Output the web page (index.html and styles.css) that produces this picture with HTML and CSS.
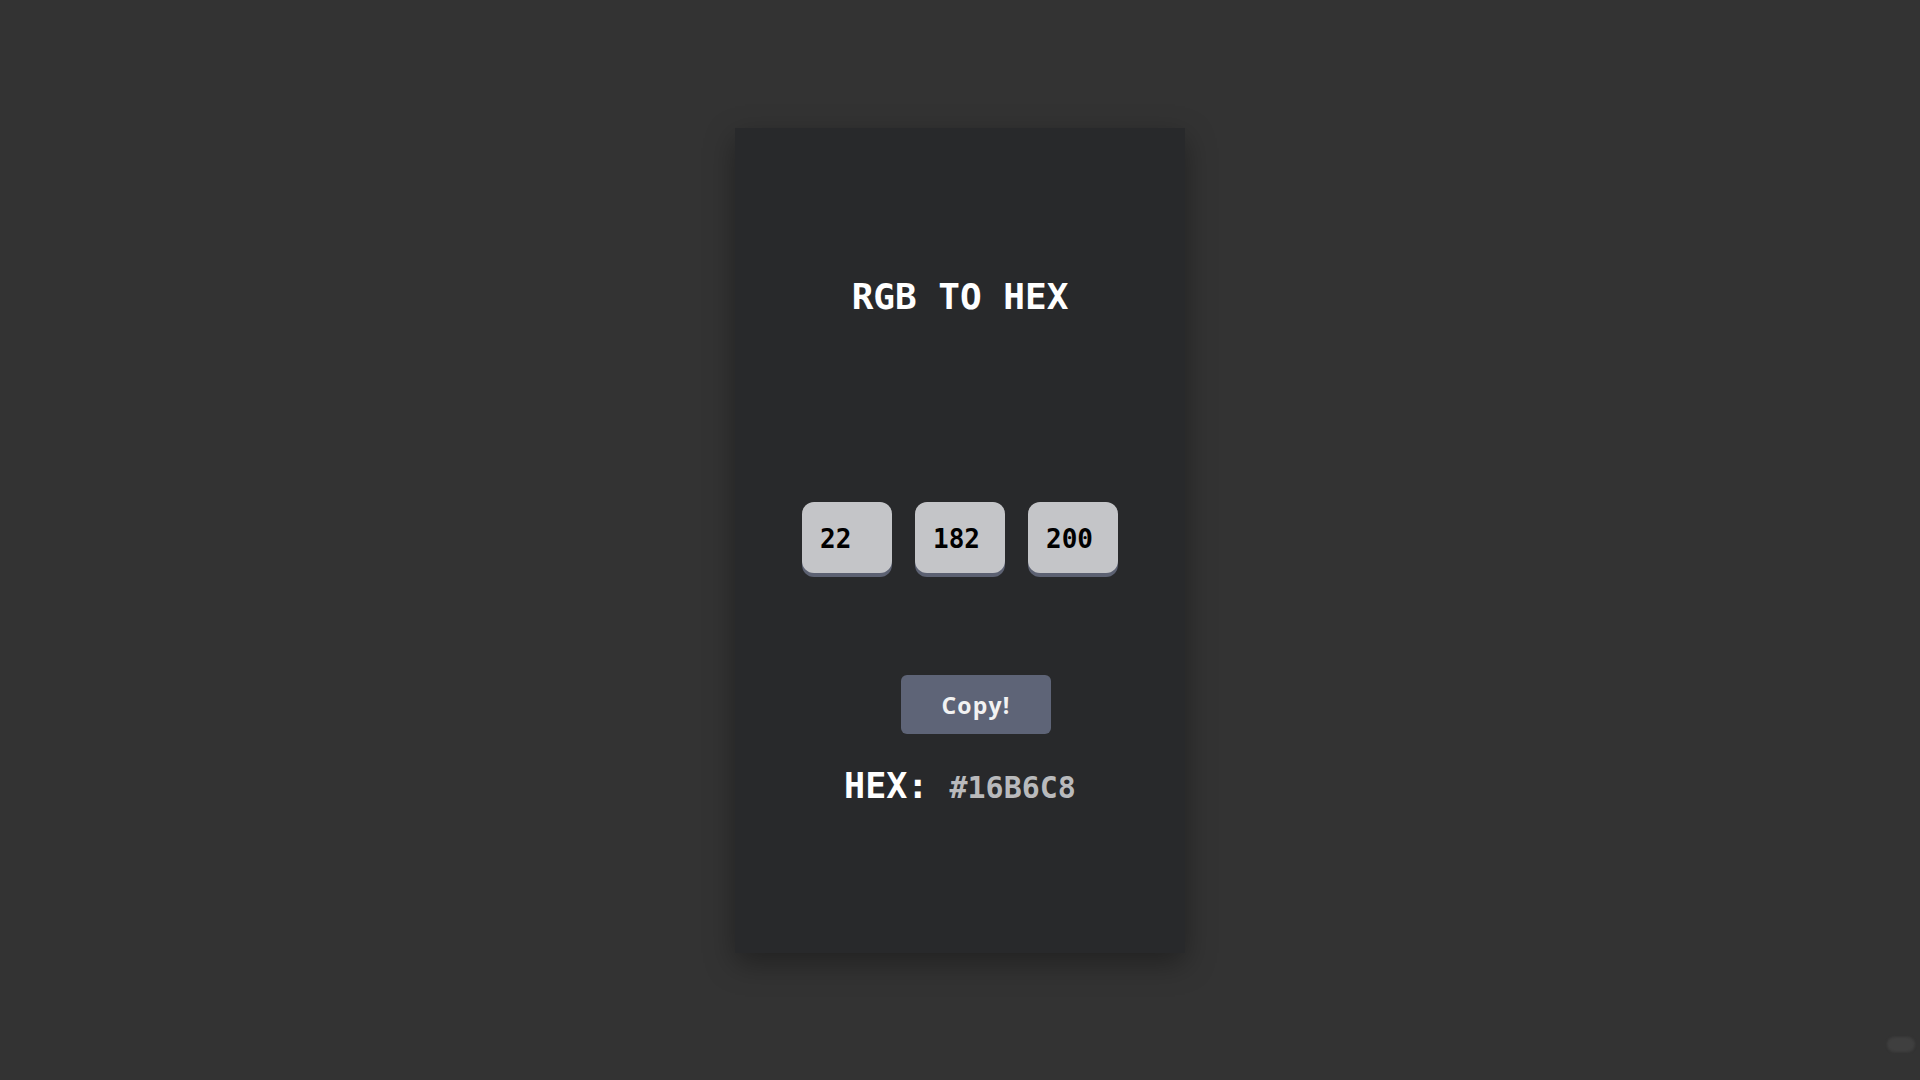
FILE: index.html
```html
<!DOCTYPE html>
<html lang="en">
<head>
<meta charset="utf-8">
<title>RGB to HEX</title>
<link rel="stylesheet" href="styles.css">
</head>
<body>
<main class="card">
  <h1 class="title">RGB TO HEX</h1>
  <div class="inputs">
    <input class="channel" type="text" value="22">
    <input class="channel" type="text" value="182">
    <input class="channel" type="text" value="200">
  </div>
  <button class="copy">Copy!</button>
  <p class="hex">HEX: <span class="hex-value">#16B6C8</span></p>
</main>
<div class="pill"></div>
</body>
</html>
```
FILE: styles.css
```css
html, body {
  margin: 0;
  padding: 0;
  height: 100%;
}
body {
  background: #333333;
  display: flex;
  justify-content: center;
  align-items: flex-start;
  font-family: "DejaVu Sans Mono", monospace;
}
.card {
  margin-top: 128px;
  width: 450px;
  height: 825px;
  box-sizing: border-box;
  background: #28292b;
  box-shadow: 0 10px 28px rgba(0, 0, 0, 0.35);
  display: flex;
  flex-direction: column;
  align-items: center;
  padding-top: 147px;
}
.title {
  margin: 0;
  font-size: 36px;
  line-height: 43px;
  font-weight: bold;
  color: #ffffff;
}
.inputs {
  margin-top: 184px;
  display: flex;
  gap: 23px;
}
.channel {
  width: 90px;
  height: 71px;
  box-sizing: border-box;
  border: none;
  border-radius: 12px;
  background: #c4c5c8;
  box-shadow: 0 4px 0 #5c6172;
  padding: 2px 0 0 18px;
  font-family: "DejaVu Sans Mono", monospace;
  font-size: 26px;
  font-weight: bold;
  color: #000000;
  outline: none;
}
.copy {
  margin-top: 102px;
  margin-left: 32px;
  width: 150px;
  height: 59px;
  border: none;
  border-radius: 6px;
  background: #5e6477;
  color: #f2f2f2;
  font-family: "Open Sans", sans-serif;
  font-weight: 700;
  font-size: 23px;
  letter-spacing: 1.2px;
  cursor: pointer;
}
.hex {
  margin: 31px 0 0 0;
  font-size: 35px;
  line-height: 43px;
  font-weight: bold;
  color: #ffffff;
}
.hex-value {
  font-size: 30px;
  font-weight: bold;
  color: #b9babc;
}
.pill {
  position: fixed;
  right: 5px;
  bottom: 28px;
  width: 28px;
  height: 15px;
  border-radius: 8px;
  background: #3f3f3f;
  filter: blur(1px);
}
```
